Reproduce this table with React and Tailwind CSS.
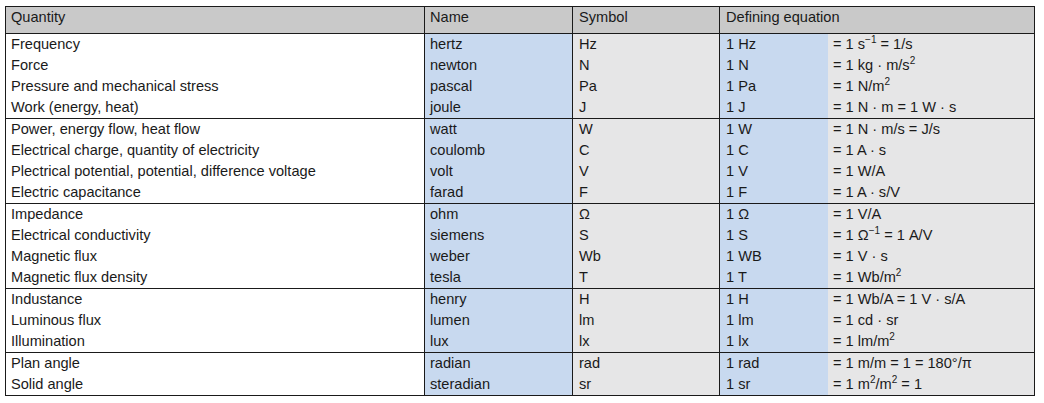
const sup = "text-[10px] top-[-0.6em]";

const groups = [
  [
    ["Frequency", "hertz", "Hz", "1 Hz", <>= 1 s<sup className={sup}>−1</sup> = 1/s</>],
    ["Force", "newton", "N", "1 N", <>= 1 kg · m/s<sup className={sup}>2</sup></>],
    ["Pressure and mechanical stress", "pascal", "Pa", "1 Pa", <>= 1 N/m<sup className={sup}>2</sup></>],
    ["Work (energy, heat)", "joule", "J", "1 J", "= 1 N · m = 1 W · s"],
  ],
  [
    ["Power, energy flow, heat flow", "watt", "W", "1 W", "= 1 N · m/s = J/s"],
    ["Electrical charge, quantity of electricity", "coulomb", "C", "1 C", "= 1 A · s"],
    ["Plectrical potential, potential, difference voltage", "volt", "V", "1 V", "= 1 W/A"],
    ["Electric capacitance", "farad", "F", "1 F", "= 1 A · s/V"],
  ],
  [
    ["Impedance", "ohm", "Ω", "1 Ω", "= 1 V/A"],
    ["Electrical conductivity", "siemens", "S", "1 S", <>= 1 Ω<sup className={sup}>−1</sup> = 1 A/V</>],
    ["Magnetic flux", "weber", "Wb", "1 WB", "= 1 V · s"],
    ["Magnetic flux density", "tesla", "T", "1 T", <>= 1 Wb/m<sup className={sup}>2</sup></>],
  ],
  [
    ["Industance", "henry", "H", "1 H", "= 1 Wb/A = 1 V · s/A"],
    ["Luminous flux", "lumen", "lm", "1 lm", "= 1 cd · sr"],
    ["Illumination", "lux", "lx", "1 lx", <>= 1 lm/m<sup className={sup}>2</sup></>],
  ],
  [
    ["Plan angle", "radian", "rad", "1 rad", "= 1 m/m = 1 = 180°/π"],
    ["Solid angle", "steradian", "sr", "1 sr", <>= 1 m<sup className={sup}>2</sup>/m<sup className={sup}>2</sup> = 1</>],
  ],
];

const cols = "grid grid-cols-[419px_148px_147px_108px_206px]";

export default function App() {
  return (
    <div className="w-[1044px] h-[403px] bg-white pt-[6px] pl-[5px] text-[14.6px] leading-[21px] text-[#1a1a1a] font-['Liberation_Sans',Arial,sans-serif]">
      <div className="w-[1030px] border border-[#1a1a1a]">
        {/* header */}
        <div className={`${cols} h-[26px] bg-[#c9c9c9]`}>
          <div className="border-r border-[#1a1a1a] pl-[5px]">Quantity</div>
          <div className="border-r border-[#1a1a1a] pl-[5px]">Name</div>
          <div className="border-r border-[#1a1a1a] pl-[6px]">Symbol</div>
          <div className="col-span-2 pl-[6px]">Defining equation</div>
        </div>

        {groups.map((rows, gi) => (
          <div key={gi} className="border-t border-[#1a1a1a]">
            {rows.map((r, i) => (
              <div key={i} className={`${cols} h-[21px]`}>
                <div className="border-r border-[#1a1a1a] bg-white pl-[5px] whitespace-nowrap">{r[0]}</div>
                <div className="border-r border-[#1a1a1a] bg-[#c8d9ef] pl-[5px]">{r[1]}</div>
                <div className="border-r border-[#1a1a1a] bg-[#e6e6e7] pl-[6px]">{r[2]}</div>
                <div className="bg-[#c8d9ef] pl-[6px]">{r[3]}</div>
                <div className="bg-[#e6e6e7] pl-[5px] whitespace-nowrap">{r[4]}</div>
              </div>
            ))}
          </div>
        ))}
      </div>
    </div>
  );
}
